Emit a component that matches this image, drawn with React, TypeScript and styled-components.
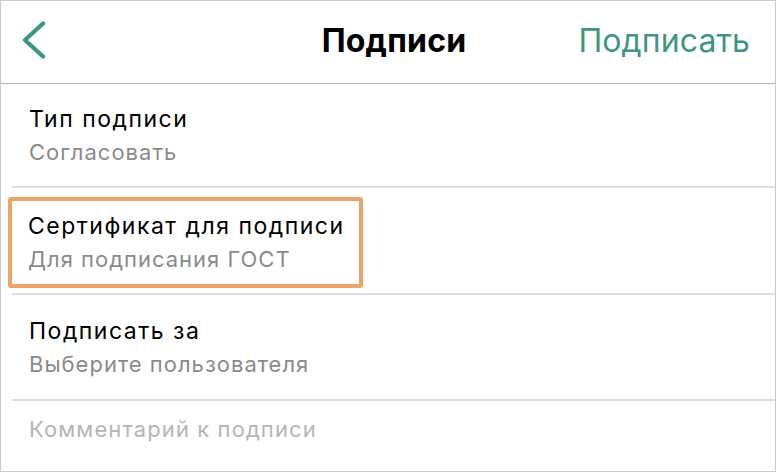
import React from "react";
import styled, { createGlobalStyle } from "styled-components";

const Global = createGlobalStyle`
  html, body { margin: 0; padding: 0; background: #fff; }
  * { box-sizing: border-box; }
`;

const Screen = styled.div`
  width: 776px;
  height: 472px;
  border: 1px solid #cbcbcb;
  background: #fff;
  display: flex;
  flex-direction: column;
  font-family: Inter, "Liberation Sans", Arial, sans-serif;
  overflow: hidden;
`;

const NavBar = styled.header`
  height: 83px;
  flex: none;
  border-bottom: 1px solid #b4b4b4;
  display: grid;
  grid-template-columns: 1fr auto 1fr;
  align-items: center;
  padding: 0 25px 3px 20px;
`;

const BackButton = styled.button`
  justify-self: start;
  background: none;
  border: none;
  padding: 0;
  display: flex;
  color: #3e9681;
`;

const Title = styled.h1`
  margin: 0 0 0 17px;
  font-size: 32px;
  font-weight: 700;
  letter-spacing: 0.2px;
  color: #000;
`;

const Action = styled.button`
  justify-self: end;
  background: none;
  border: none;
  padding: 0;
  font-family: inherit;
  font-size: 32px;
  letter-spacing: 0.1px;
  color: #3e9681;
`;

const List = styled.div`
  flex: 1;
  display: flex;
  flex-direction: column;
  padding-left: 11px;
`;

const Row = styled.div<{ $h: number; $top?: number }>`
  height: ${(p) => p.$h}px;
  flex: none;
  border-bottom: 2px solid #dedede;
  display: flex;
  align-items: center;
  padding-top: ${(p) => p.$top ?? 0}px;
`;

const Cell = styled.div<{ $highlight?: boolean }>`
  display: flex;
  flex-direction: column;
  gap: 6px;
  margin-left: ${(p) => (p.$highlight ? "-4px" : "0")};
  padding: ${(p) => (p.$highlight ? "11px 0 12px 16px" : "0 0 0 17px")};
  border: ${(p) => (p.$highlight ? "4px solid #e9a466" : "none")};
  border-radius: 3px;
  width: ${(p) => (p.$highlight ? "355px" : "auto")};
`;

const Label = styled.div`
  font-size: 23px;
  letter-spacing: 1.5px;
  color: #000;
  line-height: 28px;
`;

const Value = styled.div`
  font-size: 22px;
  letter-spacing: 1px;
  color: #8a8a8a;
  line-height: 26px;
`;

const CommentRow = styled.div`
  flex: 1;
  display: flex;
  align-items: center;
  padding-bottom: 14px;
`;

const Placeholder = styled.div`
  font-size: 22px;
  letter-spacing: 1.1px;
  line-height: 26px;
  color: #b4b4b4;
  padding-left: 17px;
`;

export default function App() {
  return (
    <>
      <Global />
      <Screen>
        <NavBar>
          <BackButton aria-label="Назад">
            <svg width="26" height="40" viewBox="0 0 26 40" fill="none">
              <path d="M22 2.5 L4 19 L22 35.5" stroke="currentColor" strokeWidth="4.3" strokeLinecap="round" strokeLinejoin="round" />
            </svg>
          </BackButton>
          <Title>Подписи</Title>
          <Action>Подписать</Action>
        </NavBar>
        <List>
          <Row $h={104}>
            <Cell>
              <Label>Тип подписи</Label>
              <Value>Согласовать</Value>
            </Cell>
          </Row>
          <Row $h={107} $top={4}>
            <Cell $highlight>
              <Label>Сертификат для подписи</Label>
              <Value>Для подписания ГОСТ</Value>
            </Cell>
          </Row>
          <Row $h={106}>
            <Cell>
              <Label>Подписать за</Label>
              <Value>Выберите пользователя</Value>
            </Cell>
          </Row>
          <CommentRow>
            <Placeholder>Комментарий к подписи</Placeholder>
          </CommentRow>
        </List>
      </Screen>
    </>
  );
}
